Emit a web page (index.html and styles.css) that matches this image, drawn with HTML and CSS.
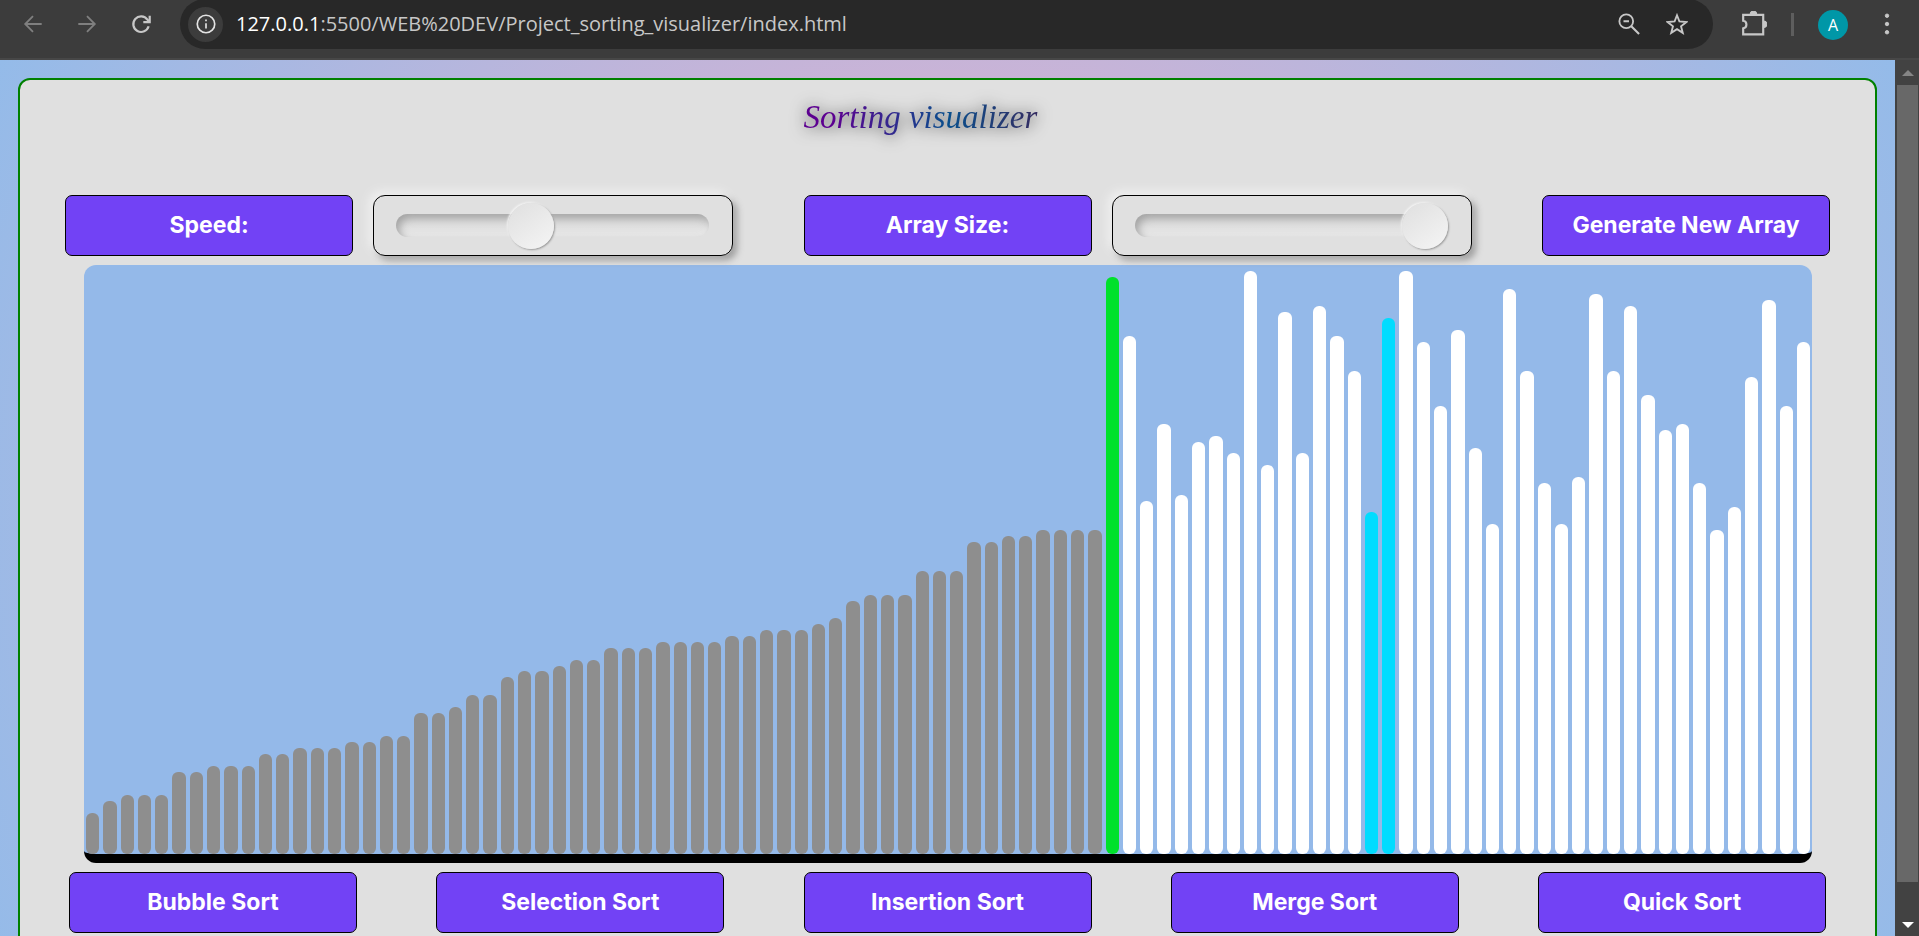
FILE: index.html
```html
<!DOCTYPE html>
<html lang="en">
<head>
<meta charset="utf-8">
<title>Sorting visualizer</title>
<link rel="stylesheet" href="styles.css">
</head>
<body>
<header class="toolbar">
  <button class="tool dim" aria-label="Back"><svg viewBox="0 0 24 24"><path d="M21.500 12H4M12 3.500 3.500 12l8.500 8.500"/></svg></button>
  <button class="tool dim" aria-label="Forward"><svg viewBox="0 0 24 24"><path d="M2.500 12H20M12 3.500l8.500 8.500-8.500 8.500"/></svg></button>
  <button class="tool" aria-label="Reload"><svg viewBox="0 0 24 24"><path d="M20.300 14.500A8.500 8.500 0 1 1 19 7.200L20.500 9M21.500 3v7h-7" stroke-width="2.400"/></svg></button>
  <div class="address">
    <button class="site-info" aria-label="Site information"><svg viewBox="0 0 24 24"><circle cx="12" cy="12" r="10.500"/><path d="M12 11v6.500M12 6.500v2.300"/></svg></button>
    <div class="url"><span class="host">127.0.0.1</span>:5500/WEB%20DEV/Project_sorting_visualizer/index.html</div>
    <button class="tool" aria-label="Zoom"><svg viewBox="0 0 24 24"><circle cx="9" cy="9" r="7.500"/><path d="M14.500 14.500l8.500 8.500M6 9h6" stroke-width="2.300"/></svg></button>
    <button class="tool" aria-label="Bookmark"><svg viewBox="0 0 24 24"><path d="M12 2.500l2.600 6.700 7.700.600-5.900 4.700 1.900 7.200L12 17.600 5.700 21.700l1.900-7.200-5.900-4.700 7.700-.600z"/></svg></button>
  </div>
  <button class="tool" aria-label="Extensions"><svg class="wide" viewBox="0 0 24 24"><path d="M2 3.500h18.500v18H2v-5.500c4-.500 4-6.500 0-7z"/><path class="solid" d="M8.500 3a3 2.800 0 0 1 6 0zM21 9.300a2.800 3 0 0 1 0 6z"/></svg></button>
  <span class="divider"></span>
  <button class="avatar">A</button>
  <button class="tool menu" aria-label="Menu"><svg viewBox="0 0 24 24"><g class="solid"><circle cx="12" cy="3" r="1.900"/><circle cx="12" cy="12" r="1.900"/><circle cx="12" cy="21" r="1.900"/></g></svg></button>
</header>
<div class="viewport">
  <div class="page">
    <main class="card">
      <h1 class="title">Sorting visualizer</h1>
      <div class="controls">
        <div class="field">
          <label class="box" for="speed">Speed:</label>
          <div class="slider"><input id="speed" type="range" min="0" max="100" value="42"></div>
        </div>
        <div class="field">
          <label class="box" for="size">Array Size:</label>
          <div class="slider"><input id="size" type="range" min="5" max="100" value="100"></div>
        </div>
        <button class="box">Generate New Array</button>
      </div>
      <div class="chart" id="chart"></div>
      <div class="algorithms">
        <button class="box">Bubble Sort</button>
        <button class="box">Selection Sort</button>
        <button class="box">Insertion Sort</button>
        <button class="box">Merge Sort</button>
        <button class="box">Quick Sort</button>
      </div>
    </main>
  </div>
  <div class="scrollbar">
    <svg class="arrow up" viewBox="0 0 12 6"><path d="M0 6l6-6 6 6z"/></svg>
    <div class="track"><div class="thumb"></div></div>
    <svg class="arrow down" viewBox="0 0 12 6"><path d="M0 0l6 6 6-6z"/></svg>
  </div>
</div>
<script src="app.js"></script>
</body>
</html>
```
FILE: styles.css
```css
* { box-sizing: border-box; }
body {
  margin: 0;
  height: 100vh;
  overflow: hidden;
  display: flex;
  flex-direction: column;
  font-family: "Open Sans", sans-serif;
}
button { font: inherit; padding: 0; border: 0; background: none; }
svg { display: block; }

.toolbar {
  flex: none;
  display: flex;
  align-items: center;
  padding: 0 15px 9px 16px;
  background: #3c3c3c;
  border-bottom: 2px solid #474747;
}
.tool { flex: none; width: 34px; height: 34px; margin: 0 20px 2px 0; color: #c7c7c7; }
.tool svg { width: 22px; height: 22px; margin: 0 auto; }
.tool .wide { width: 26px; height: 26px; }
.toolbar svg { fill: none; stroke: currentColor; stroke-width: 2; }
.toolbar .solid { fill: currentColor; stroke: currentColor; stroke-width: 1; }
.dim { color: #7f7f7f; }
.address {
  flex: 1;
  display: flex;
  align-items: center;
  height: 50px;
  margin: -1px 24px 0 2px;
  padding: 0 19px 0 8px;
  border-radius: 25px;
  background: #282828;
}
.address .tool { margin: 0 0 0 14px; }
.site-info {
  width: 35px;
  height: 35px;
  margin-right: 13px;
  border-radius: 50%;
  background: #3c3c3c;
  color: #e3e3e3;
}
.site-info svg { width: 20px; height: 20px; margin: 0 auto; }
.url { flex: 1; font-size: 20px; line-height: 28px; color: #c7c7c7; white-space: nowrap; }
.host { color: #fff; }
.divider { width: 3px; height: 23px; margin-right: 24px; background: #5e5e5e; }
.avatar {
  width: 30px;
  height: 30px;
  margin-right: 22px;
  border-radius: 50%;
  background: #0097a7;
  color: #fff;
  font-size: 16px;
}
.menu { margin-right: 0; }

.viewport { flex: 1; min-height: 0; display: flex; }
.page {
  flex: 1;
  align-self: flex-start;
  padding: 18px;
  background: radial-gradient(circle, #eeaeca 0%, #94bbe9 100%);
}
.card {
  padding: 0 0 20px;
  border: 2px solid green;
  border-radius: 12px;
  background: #e0e0e0;
}
.title {
  width: 288px;
  height: 75px;
  margin: 0 auto 40px;
  font: italic 33px/74px "Liberation Serif", cursive;
  color: transparent;
  background: linear-gradient(90deg, #5c0090 10%, #0a4f8c 50%, #3a285c 85%);
  -webkit-background-clip: text;
  background-clip: text;
  filter: drop-shadow(0 1px 8px #000000cc);
}
.controls, .algorithms { display: flex; justify-content: space-between; }
.controls { padding: 0 45px; }
.algorithms { padding: 0 49px; }
.field { display: flex; gap: 20px; }
.box {
  width: 288px;
  height: 61px;
  border: 1px solid #000;
  border-radius: 7px;
  background: #7242f5;
  color: #fff;
  font-family: "Inter", "Open Sans", sans-serif;
  font-size: 23px;
  font-weight: 700;
  line-height: 59px;
  text-align: center;
}
.slider {
  width: 360px;
  height: 61px;
  display: flex;
  align-items: center;
  padding: 0 23px 0 22px;
  border: 1px solid #000;
  border-radius: 12px;
  box-shadow: -4px -4px 10px #f0f0f0, 4px 4px 7px #9a9a9a;
}
.slider input {
  -webkit-appearance: none;
  appearance: none;
  width: 100%;
  height: 23px;
  margin: 0;
  border-radius: 12px;
  background: linear-gradient(#d4d4d4, #e9e9e9);
  box-shadow: inset 3px 4px 8px #a2a2a2, inset -2px -2px 4px #ececec;
}
.slider input::-webkit-slider-thumb {
  -webkit-appearance: none;
  width: 46px;
  height: 46px;
  border-radius: 50%;
  background: linear-gradient(145deg, #dfdfdf, #f5f5f5);
  box-shadow: 1px 1px 2px #999, -1px -1px 2px #f5f5f5;
}
.chart {
  display: flex;
  align-items: flex-end;
  height: 598px;
  margin: 9px 63px 9px 64px;
  border-bottom: 9px solid #000;
  border-radius: 12px;
  background: #94b9e9;
}
.bar { flex: 1; margin: 0 2px; border-radius: 6px; background: #fff; }
.bar.sorted { background: #8e8e8e; }
.bar.minimum { background: #00e12b; }
.bar.compared { background: #00dcff; }

.scrollbar {
  flex: none;
  width: 24px;
  display: flex;
  flex-direction: column;
  align-items: center;
  padding: 10px 1px 8px 2px;
  background: #424242;
}
.arrow { width: 12px; height: 6px; }
.up { fill: #858585; }
.down { fill: #fff; }
.track { flex: 1; width: 100%; padding: 9px 0 7px; }
.thumb { height: 96%; background: #686868; }
```
FILE: app.js
```js
const values = [
  7, 9, 10, 10, 10, 14, 14, 15, 15, 15, 17, 17, 18, 18, 18, 19, 19, 20, 20, 24,
  24, 25, 27, 27, 30, 31, 31, 32, 33, 33, 35, 35, 35, 36, 36, 36, 36, 37, 37, 38,
  38, 38, 39, 40, 43, 44, 44, 44, 48, 48, 48, 53, 53, 54, 54, 55, 55, 55, 55, 98,
  88, 60, 73, 61, 70, 71, 68, 99, 66, 92, 68, 93, 88, 82, 58, 91, 99, 87, 76, 89,
  69, 56, 96, 82, 63, 56, 64, 95, 82, 93, 78, 72, 73, 63, 55, 59, 81, 94, 76, 87
];
const sortedCount = 59;
const minimumIndex = 59;
const comparedIndexes = [74, 75];

const chart = document.getElementById("chart");
values.forEach((value, index) => {
  const bar = document.createElement("div");
  bar.className = "bar";
  if (index < sortedCount) bar.classList.add("sorted");
  if (index === minimumIndex) bar.classList.add("minimum");
  if (comparedIndexes.includes(index)) bar.classList.add("compared");
  bar.style.height = value + "%";
  chart.append(bar);
});
```
